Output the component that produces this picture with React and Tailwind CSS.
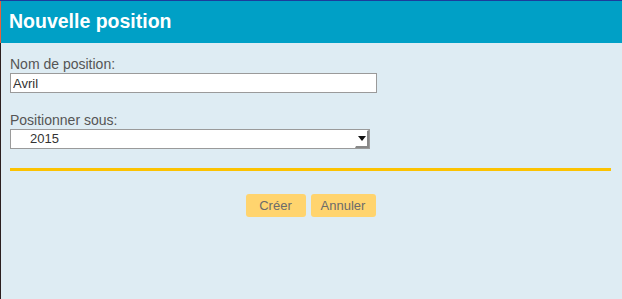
import React from 'react';

const App = () => {
    return (
        <div className="w-[622px] h-[299px] overflow-hidden bg-[#deecf3] border-t border-[#1b3d9c] flex" style={{ fontFamily: '"Liberation Sans", Arial, sans-serif' }}>
            <div className="w-px flex flex-col">
                <div className="h-[42px] bg-[#e8603c]" />
                <div className="flex-1 bg-[#2b1f1f]" />
            </div>
            <div className="flex-1 flex flex-col">
                <div className="h-[42px] bg-[#00a0c6] flex items-center pl-[8px]">
                    <h1 className="text-[19.5px] font-bold text-white">Nouvelle position</h1>
                </div>
                <div className="pl-[9px] pr-[11px] pt-[13px]">
                    <label className="block text-[14px] leading-[17px] text-[#555]">Nom de position:</label>
                    <input
                        className="block w-[367px] h-[20px] bg-white border border-[#9a9a9a] px-[2px] text-[13px] text-[#333] outline-none"
                        defaultValue="Avril"
                    />
                    <label className="block mt-[19px] text-[14px] leading-[17px] text-[#555]">Positionner sous:</label>
                    <div className="w-[360px] h-[20px] bg-white border border-[#9a9a9a] flex items-center">
                        <span className="flex-1 pl-[19px] text-[13px] text-[#333]">2015</span>
                        <div className="w-[14px] h-[18px] flex items-center justify-center border-r-2 border-b-2 border-[#888] border-l border-t border-l-white border-t-white">
                            <svg width="8" height="5" viewBox="0 0 8 5"><path d="M0 0h8L4 5z" fill="#111" /></svg>
                        </div>
                    </div>
                    <div className="mt-[19px] h-[3px] bg-[#fcc200]" />
                    <div className="mt-[23px] flex justify-center gap-[5px]">
                        <button className="w-[60px] h-[23px] rounded-[3px] bg-[#ffd46e] text-[13px] text-[#6b6b6b]">Créer</button>
                        <button className="w-[65px] h-[23px] rounded-[3px] bg-[#ffd46e] text-[13px] text-[#6b6b6b]">Annuler</button>
                    </div>
                </div>
            </div>
        </div>
    );
};

export default App;
